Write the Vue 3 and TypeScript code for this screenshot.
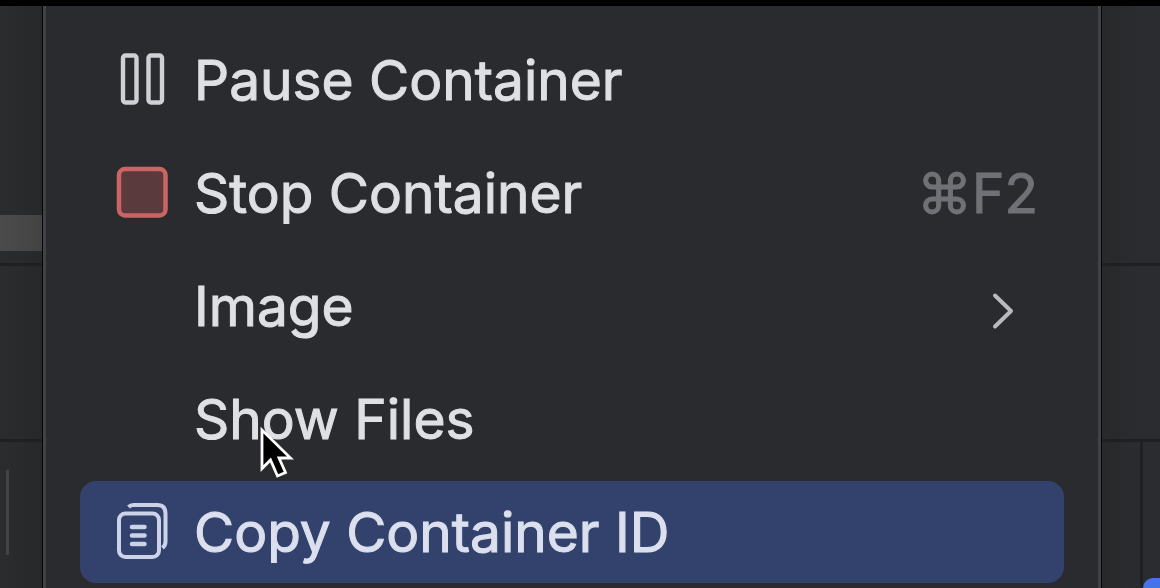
<script setup lang="ts">
type IconName = 'pause' | 'stop' | 'copy' | 'none'

interface MenuItem {
  label: string
  icon: IconName
  shortcut?: string
  submenu?: boolean
  active?: boolean
}

const items: MenuItem[] = [
  { label: 'Pause Container', icon: 'pause' },
  { label: 'Stop Container', icon: 'stop', shortcut: '⌘F2' },
  { label: 'Image', icon: 'none', submenu: true },
  { label: 'Show Files', icon: 'none' },
  { label: 'Copy Container ID', icon: 'copy', active: true },
]
</script>

<template>
  <div class="screen">
    <div class="side left">
      <div class="cell"><div class="selection"></div></div>
      <div class="cell"></div>
      <div class="cell last"><div class="rule"></div></div>
    </div>

    <nav class="menu" aria-label="Container actions">
      <ul class="list">
        <li v-for="item in items" :key="item.label">
          <button type="button" class="item" :class="{ active: item.active }">
            <span class="icon">
              <svg v-if="item.icon === 'pause'" viewBox="0 0 52 60" fill="none" stroke="#ced0d6" stroke-width="4.4">
                <rect x="7" y="5.500" width="13.500" height="47" rx="2.5" />
                <rect x="32.500" y="5.500" width="13.500" height="47" rx="2.5" />
              </svg>
              <svg v-else-if="item.icon === 'stop'" viewBox="0 0 52 60">
                <rect x="3" y="6" width="46.500" height="46.500" rx="6" fill="#5a3a3c" stroke="#cb6465" stroke-width="4.5" />
              </svg>
              <svg v-else-if="item.icon === 'copy'" viewBox="0 0 52 60" fill="none" stroke="#ccd2e8" stroke-width="4">
                <rect x="3" y="11.500" width="40" height="43.500" rx="6.500" />
                <path d="M12.500 5Q14.500 3 17.500 3H41.500Q49.500 3 49.500 11.500V39.500Q49.500 43.500 46.500 46" />
                <path d="M16 25H28.500M16 33.500H28.500M16 42H28.500" stroke-linecap="round" stroke-width="4.500" />
              </svg>
            </span>
            <span class="label">{{ item.label }}</span>
            <span v-if="item.shortcut" class="shortcut">{{ item.shortcut }}</span>
            <svg v-if="item.submenu" class="chevron" viewBox="0 0 24 38" fill="none" stroke="#b8bac0" stroke-width="4" stroke-linecap="round" stroke-linejoin="round">
              <path d="M4 3.500L20 19L4 34.500" />
            </svg>
          </button>
        </li>
      </ul>
    </nav>

    <div class="side right">
      <div class="cell"></div>
      <div class="cell"></div>
      <div class="cell last"><div class="pane"><div class="chip"></div></div></div>
    </div>

    <svg class="cursor" viewBox="0 0 36 54">
      <path d="M3 5V43.500L11.500 35L18.500 51L26.500 47.500L20 33H31.500Z" fill="#000" stroke="#fff" stroke-width="2.800" />
    </svg>
  </div>
</template>

<style>
body {
  margin: 0;
  background: #2a2b2e;
}
</style>

<style scoped>
.screen {
  position: relative;
  box-sizing: border-box;
  display: grid;
  grid-template-columns: 42px minmax(0, 1fr) 58px;
  height: 100vh;
  overflow: hidden;
  border-top: 6px solid #000;
  background: #2a2b2e;
  font-family: Inter, "Liberation Sans", sans-serif;
}

.side {
  display: grid;
  grid-template-rows: 260px 176px minmax(0, 1fr);
}

.left {
  background: linear-gradient(90deg, #2b2c2e, #27282a);
}

.right {
  background: linear-gradient(90deg, #27282a, #2b2c2f 60%);
}

.cell {
  box-sizing: border-box;
  border-bottom: 3px solid #1f2022;
}

.cell.last {
  border-bottom: 0;
}

.selection {
  height: 36px;
  margin-top: 209px;
  background: linear-gradient(90deg, #4b4b4c, #434344);
}

.rule {
  width: 3px;
  height: 85px;
  margin: 28px 0 0 6px;
  background: #424346;
}

.pane {
  box-sizing: border-box;
  height: 100%;
  margin-left: 38px;
  padding-top: 136px;
  border-left: 3px solid #1f2022;
}

.chip {
  height: 24px;
  border-radius: 10px 0 0 10px;
  background: #4673e8;
}

.menu {
  border: solid #060607;
  border-width: 0 1px;
  background: #2a2b2e;
  box-shadow: inset 3px 0 #414245, inset -3px 0 #414245;
}

.list {
  display: flex;
  flex-direction: column;
  gap: 11px;
  margin: 0;
  padding: 23px 37px 0;
  list-style: none;
}

.item {
  box-sizing: border-box;
  display: flex;
  align-items: center;
  width: 100%;
  height: 102px;
  padding: 0 26px 0 36px;
  border: 0;
  border-radius: 16px;
  background: transparent;
  color: #dfe0e3;
  font: inherit;
  font-size: 55px;
  line-height: 68px;
  text-align: left;
  white-space: nowrap;
  -webkit-text-stroke: 1px;
}

.item.active {
  background: #32426c;
  color: #dce0ee;
}

.icon {
  flex: none;
  width: 52px;
  height: 60px;
  margin-right: 26px;
}

.icon svg {
  display: block;
  width: 52px;
  height: 60px;
}

.label {
  flex: 1;
}

.shortcut {
  color: #6f7177;
}

.chevron {
  width: 24px;
  height: 38px;
  margin: 10px 23px 0 0;
}

.cursor {
  position: absolute;
  top: 419px;
  left: 259px;
  width: 36px;
  height: 54px;
}
</style>
